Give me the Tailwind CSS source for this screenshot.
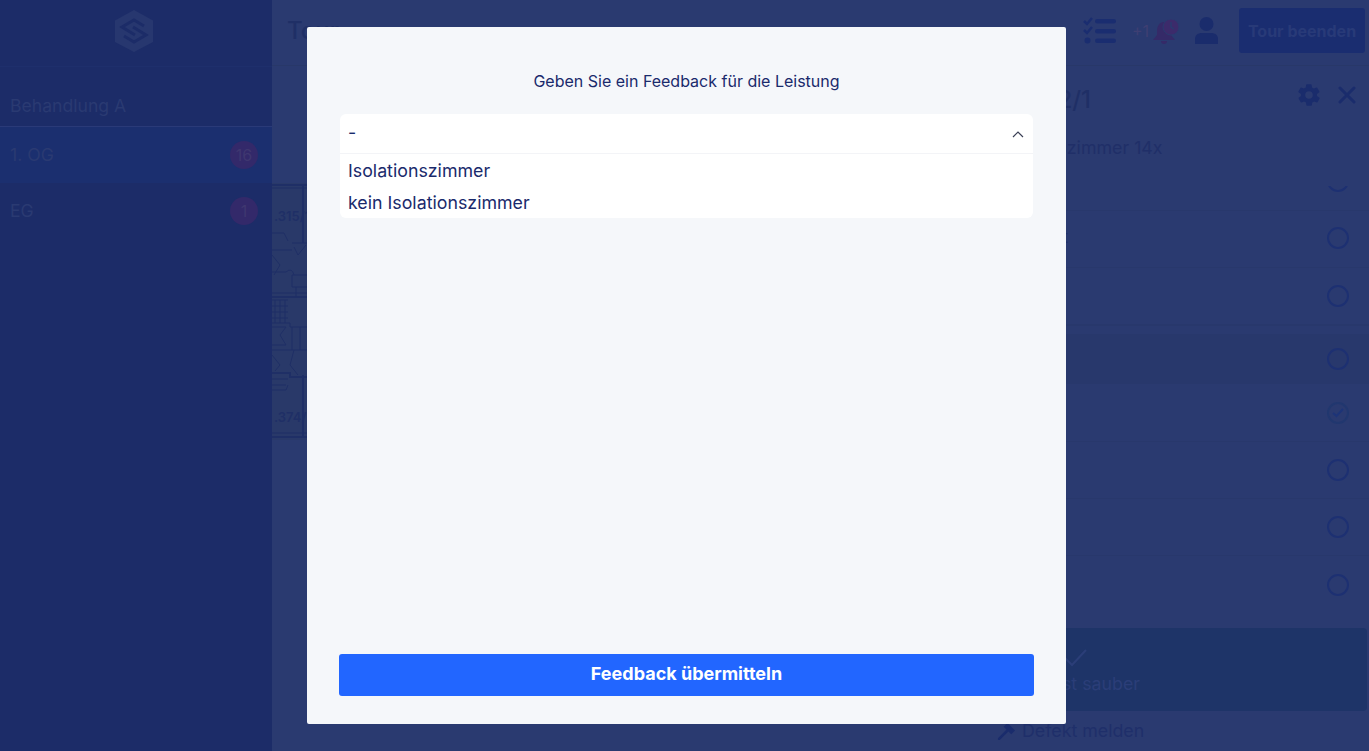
<!DOCTYPE html>
<html lang="de">
<head>
<meta charset="utf-8">
<title>Feedback</title>
<script src="https://cdn.jsdelivr.net/npm/@tailwindcss/browser@4"></script>
</head>
<body class="m-0 overflow-hidden bg-[#2a3a70] font-['Inter','Liberation_Sans',sans-serif]">
<div class="relative flex h-[751px] w-[1369px] overflow-hidden">
  <!-- Sidebar -->
  <aside class="flex w-[272px] shrink-0 flex-col bg-[#1c2c68]">
    <div class="flex h-[67px] items-start justify-center border-b border-[#1e2f6c] pr-[4px] pt-[10px]">
      <svg width="38" height="42" viewBox="0 0 38 42" fill="none">
        <path d="M19 0 L38 10.500 L38 32 L19 42 L0 32 L0 10.500 Z" fill="#27376f"/>
        <path d="M29 16 L19 10 L7 17 L20 25" stroke="#1c2c68" stroke-width="3"/>
        <path d="M9 26 L19 32 L31 25 L18 17" stroke="#1c2c68" stroke-width="3"/>
      </svg>
    </div>
    <div class="flex h-[60px] items-end border-b border-[#2a3a78] px-[10px] pb-[8px] text-[17.6px] leading-[24px] text-[#2a3a72]">Behandlung A</div>
    <div class="flex h-[56px] items-center justify-between bg-[#1b2f6f] pl-[10px] pr-[14px] text-[17.6px] text-[#2a3a72]">
      <span>1. OG</span>
      <span class="flex h-[28px] w-[28px] items-center justify-center rounded-full bg-[#33296a] text-[16px] text-[#3f3770]">16</span>
    </div>
    <div class="flex h-[56px] items-center justify-between pl-[10px] pr-[14px] text-[17.6px] text-[#2a3a72]">
      <span>EG</span>
      <span class="flex h-[28px] w-[28px] items-center justify-center rounded-full bg-[#33296a] text-[16px] text-[#3f3770]">1</span>
    </div>
  </aside>

  <!-- Main -->
  <main class="flex min-w-0 flex-1 flex-col">
    <header class="flex h-[66px] shrink-0 items-center justify-between border-b border-[#283869] pb-[4px] pl-[15px] pr-[4px]">
      <span class="text-[24px] font-medium text-[#1f2f66]">Tour</span>
      <div class="flex items-center">
        <svg width="33" height="28" viewBox="0 0 33 28" fill="#1a2d70">
          <path d="M1 4 L4 7 L9 1" stroke="#1a2d70" stroke-width="2.500" fill="none"/>
          <path d="M1 13 L4 16 L9 10" stroke="#1a2d70" stroke-width="2.500" fill="none"/>
          <circle cx="4.500" cy="23.500" r="3"/>
          <rect x="12" y="2" width="21" height="4.500" rx="2.200"/>
          <rect x="12" y="12" width="21" height="4.500" rx="2.200"/>
          <rect x="12" y="21.500" width="21" height="4.500" rx="2.200"/>
        </svg>
        <span class="ml-[16px] text-[16px] text-[#3e3f73]">+1</span>
        <svg class="ml-[4px]" width="28" height="28" viewBox="0 0 28 28">
          <path d="M11 5 C6 5 4 10 4 14 L4 18 L0 23 L22 23 L18 18 L18 14 C18 10 16 5 11 5 Z" fill="#352a68"/>
          <path d="M8 24 A3 3 0 0 0 14 24 Z" fill="#352a68"/>
          <circle cx="18" cy="10" r="8" fill="#3c2b6b" stroke="#2a3a70" stroke-width="1"/>
          <path d="M18 5 L18 10 L21 12" stroke="#2a3a70" stroke-width="1.500" fill="none"/>
        </svg>
        <svg class="ml-[14px]" width="23" height="28" viewBox="0 0 23 28" fill="#1a2c6c">
          <circle cx="11.500" cy="7" r="7"/>
          <path d="M0 27 L0 22 C0 18 3 16 7 16 L16 16 C20 16 23 18 23 22 L23 27 Z"/>
        </svg>
        <button class="ml-[21px] h-[45px] w-[126px] rounded-[3px] bg-[#1a2d70] text-[16px] font-bold text-[#283a78]">Tour beenden</button>
      </div>
    </header>

    <div class="flex min-h-0 flex-1">
      <!-- Floor plan -->
      <div class="min-w-0 flex-1 pt-[109px]">
        <svg width="48" height="265" viewBox="0 0 48 265" fill="none" stroke="#1f2f66" stroke-width="1">
          <rect x="0" y="8" width="48" height="257" fill="#293969" stroke="none"/>
          <path stroke-width="2" d="M0 10 H48 M0 262 H48 M31 10 V68 M0 122 H48 M0 198 H18 L18 202 H48 M31 200 V262"/>
          <path d="M0 13 H48 M0 58 H12 L16 66 M0 75 H20 M20 68 H48 V72 M22 72 L26 80 L34 70 M0 80 L8 90 L2 100 M0 97 H14 Q20 92 22 100 M20 100 H48 V112 H20 Z M24 112 V122 M0 118 H48"/>
          <path d="M0 125 H16 M0 131 H16 M0 137 H16 M0 143 H16 M3 125 V148 M8 125 V148 M13 125 V148 M0 148 H18 V152 H48 M0 152 H14 L8 160 L14 170 H0 M20 152 V175 M28 152 V175 M0 175 H48 M0 180 L8 190 L3 196 M22 175 L18 190 L26 200 M0 204 H16 M0 210 H14 M0 215 H14 L16 210 M0 258 H48"/>
          <text x="2" y="46" fill="#1f2f66" stroke="none" font-size="13" font-weight="600">.315/1</text>
          <text x="2" y="247" fill="#1f2f66" stroke="none" font-size="13" font-weight="600">.374/1</text>
        </svg>
      </div>

      <!-- Right panel -->
      <section class="flex h-full w-[399px] shrink-0 flex-col">
        <div class="flex h-[66px] shrink-0 items-center justify-between pl-[29px] pr-[13px] pt-[2px]">
          <span class="text-[24px] font-medium text-[#1f2f66]">Tour 2/1</span>
          <div class="mb-[10px] flex items-center gap-[16px]">
            <svg width="26" height="26" viewBox="0 0 24 24" fill="#1a2c6c">
              <path fill-rule="evenodd" d="M19.400 13a7.800 7.800 0 0 0 0-2l2.100-1.600a.5.500 0 0 0 .1-.6l-2-3.500a.5.500 0 0 0-.6-.2l-2.500 1a7.300 7.300 0 0 0-1.700-1l-.4-2.600a.5.500 0 0 0-.5-.4h-4a.5.500 0 0 0-.5.400l-.4 2.600a7.300 7.300 0 0 0-1.700 1l-2.500-1a.5.500 0 0 0-.6.200l-2 3.500a.5.500 0 0 0 .1.600L4.600 11a7.800 7.800 0 0 0 0 2l-2.100 1.600a.5.500 0 0 0-.1.600l2 3.500c.1.200.4.300.6.200l2.500-1c.5.400 1.100.7 1.700 1l.4 2.600c0 .2.200.4.500.4h4c.3 0 .5-.2.500-.4l.4-2.600c.6-.3 1.200-.6 1.700-1l2.500 1c.2.100.5 0 .6-.2l2-3.500a.5.500 0 0 0-.1-.6ZM12 15.500a3.500 3.500 0 1 1 0-7 3.500 3.500 0 0 1 0 7Z"/>
            </svg>
            <svg width="18" height="18" viewBox="0 0 18 18" stroke="#1a2c6c" stroke-width="3" stroke-linecap="round"><path d="M2 2 L16 16 M16 2 L2 16"/></svg>
          </div>
        </div>
        <div class="mt-[4px] shrink-0 pl-[17px] text-[17.8px] leading-[24px] text-[#202f68]">Isolationszimmer 14x</div>
        <div class="mt-[26px] flex h-[25px] shrink-0 items-end justify-end overflow-hidden border-b border-[#28386c] pr-[20px]">
          <span class="mb-[18px] block h-[22px] w-[22px] shrink-0 rounded-full border-2 border-[#1d3072]"></span>
        </div>
        <div class="flex h-[57px] shrink-0 items-center justify-between border-b border-[#28386c] pb-[3px] pl-[40px] pr-[20px] text-[17.8px] text-[#202f68]">
          <span>Schnitt</span>
          <span class="block h-[22px] w-[22px] rounded-full border-2 border-[#1d3072]"></span>
        </div>
        <div class="flex h-[58px] shrink-0 items-center justify-end border-b-2 border-[#28386c] pr-[20px]">
          <span class="block h-[22px] w-[22px] rounded-full border-2 border-[#1d3072]"></span>
        </div>
        <div class="mt-[8px] flex h-[50px] shrink-0 items-center justify-end border-b border-[#28386c] bg-[#28386c] pr-[20px]">
          <span class="block h-[22px] w-[22px] rounded-full border-2 border-[#1d3072]"></span>
        </div>
        <div class="flex h-[58px] shrink-0 items-center justify-end border-b border-[#28386c] pr-[20px]">
          <span class="flex h-[22px] w-[22px] items-center justify-center rounded-full border-2 border-[#21376f]">
            <svg width="12" height="10" viewBox="0 0 12 10" fill="none" stroke="#1d3478" stroke-width="2"><path d="M1 5 L4.500 8 L11 1"/></svg>
          </span>
        </div>
        <div class="flex h-[57px] shrink-0 items-center justify-end border-b border-[#28386c] pr-[20px]">
          <span class="block h-[22px] w-[22px] rounded-full border-2 border-[#1d3072]"></span>
        </div>
        <div class="flex h-[57px] shrink-0 items-center justify-end border-b border-[#28386c] pr-[20px]">
          <span class="block h-[22px] w-[22px] rounded-full border-2 border-[#1d3072]"></span>
        </div>
        <div class="flex h-[58px] shrink-0 items-center justify-end pr-[20px]">
          <span class="block h-[22px] w-[22px] rounded-full border-2 border-[#1d3072]"></span>
        </div>
        <div class="ml-[40px] mr-[2px] mt-[14px] flex h-[83px] shrink-0 items-end justify-end rounded-[4px] bg-[#1e3468] pb-[16px] pr-[227px] text-[#2b3e78]">
          <div class="flex flex-col items-center whitespace-nowrap">
            <svg class="mb-[5px]" width="30" height="20" viewBox="0 0 30 20" fill="none" stroke="#2b3e78" stroke-width="2"><path d="M7 10 L14 17 L28 2"/></svg>
            <span class="text-[17.8px] leading-[22px]">Raum ist sauber</span>
          </div>
        </div>
        <div class="flex h-[38px] shrink-0 items-center gap-[6px] pl-[27px] pt-[2px] text-[17.8px] text-[#1f2f6a]">
          <svg width="19" height="19" viewBox="0 0 20 20" fill="#1a2c6c"><path d="M1 19 L3 19 L12 10 L15 13 L19 9 L11 1 L7 5 L10 8 L1 17 Z"/></svg>
          <span>Defekt melden</span>
        </div>
      </section>
    </div>
  </main>

  <!-- Modal -->
  <div class="absolute left-[307px] top-[27px] flex h-[697px] w-[759px] flex-col rounded-[2px] bg-[#f5f7fa] px-[32px] pb-[28px] pt-[42px] text-[#1a2a6c]">
    <h2 class="text-center text-[16px] font-normal leading-[24px]">Geben Sie ein Feedback für die Leistung</h2>
    <div class="mx-[1px] mt-[21px] h-[104px] rounded-[6px] bg-white">
      <div class="flex h-[40px] items-center justify-between border-b border-[#f3f4f7] pl-[8px] pr-[9px] text-[17.8px]">
        <span>-</span>
        <svg width="12" height="8" viewBox="0 0 12 8" fill="none" stroke="#3a3f55" stroke-width="1.200"><path d="M1 7 L6 2 L11 7"/></svg>
      </div>
      <div class="pl-[8px] pt-[1px] text-[17.8px] leading-[32px]">
        <div>Isolationszimmer</div>
        <div>kein Isolationszimmer</div>
      </div>
    </div>
    <button class="mt-auto h-[42px] w-full rounded-[3px] bg-[#2266ff] pb-[3px] text-[18px] font-bold text-white">Feedback übermitteln</button>
  </div>
</div>
</body>
</html>
